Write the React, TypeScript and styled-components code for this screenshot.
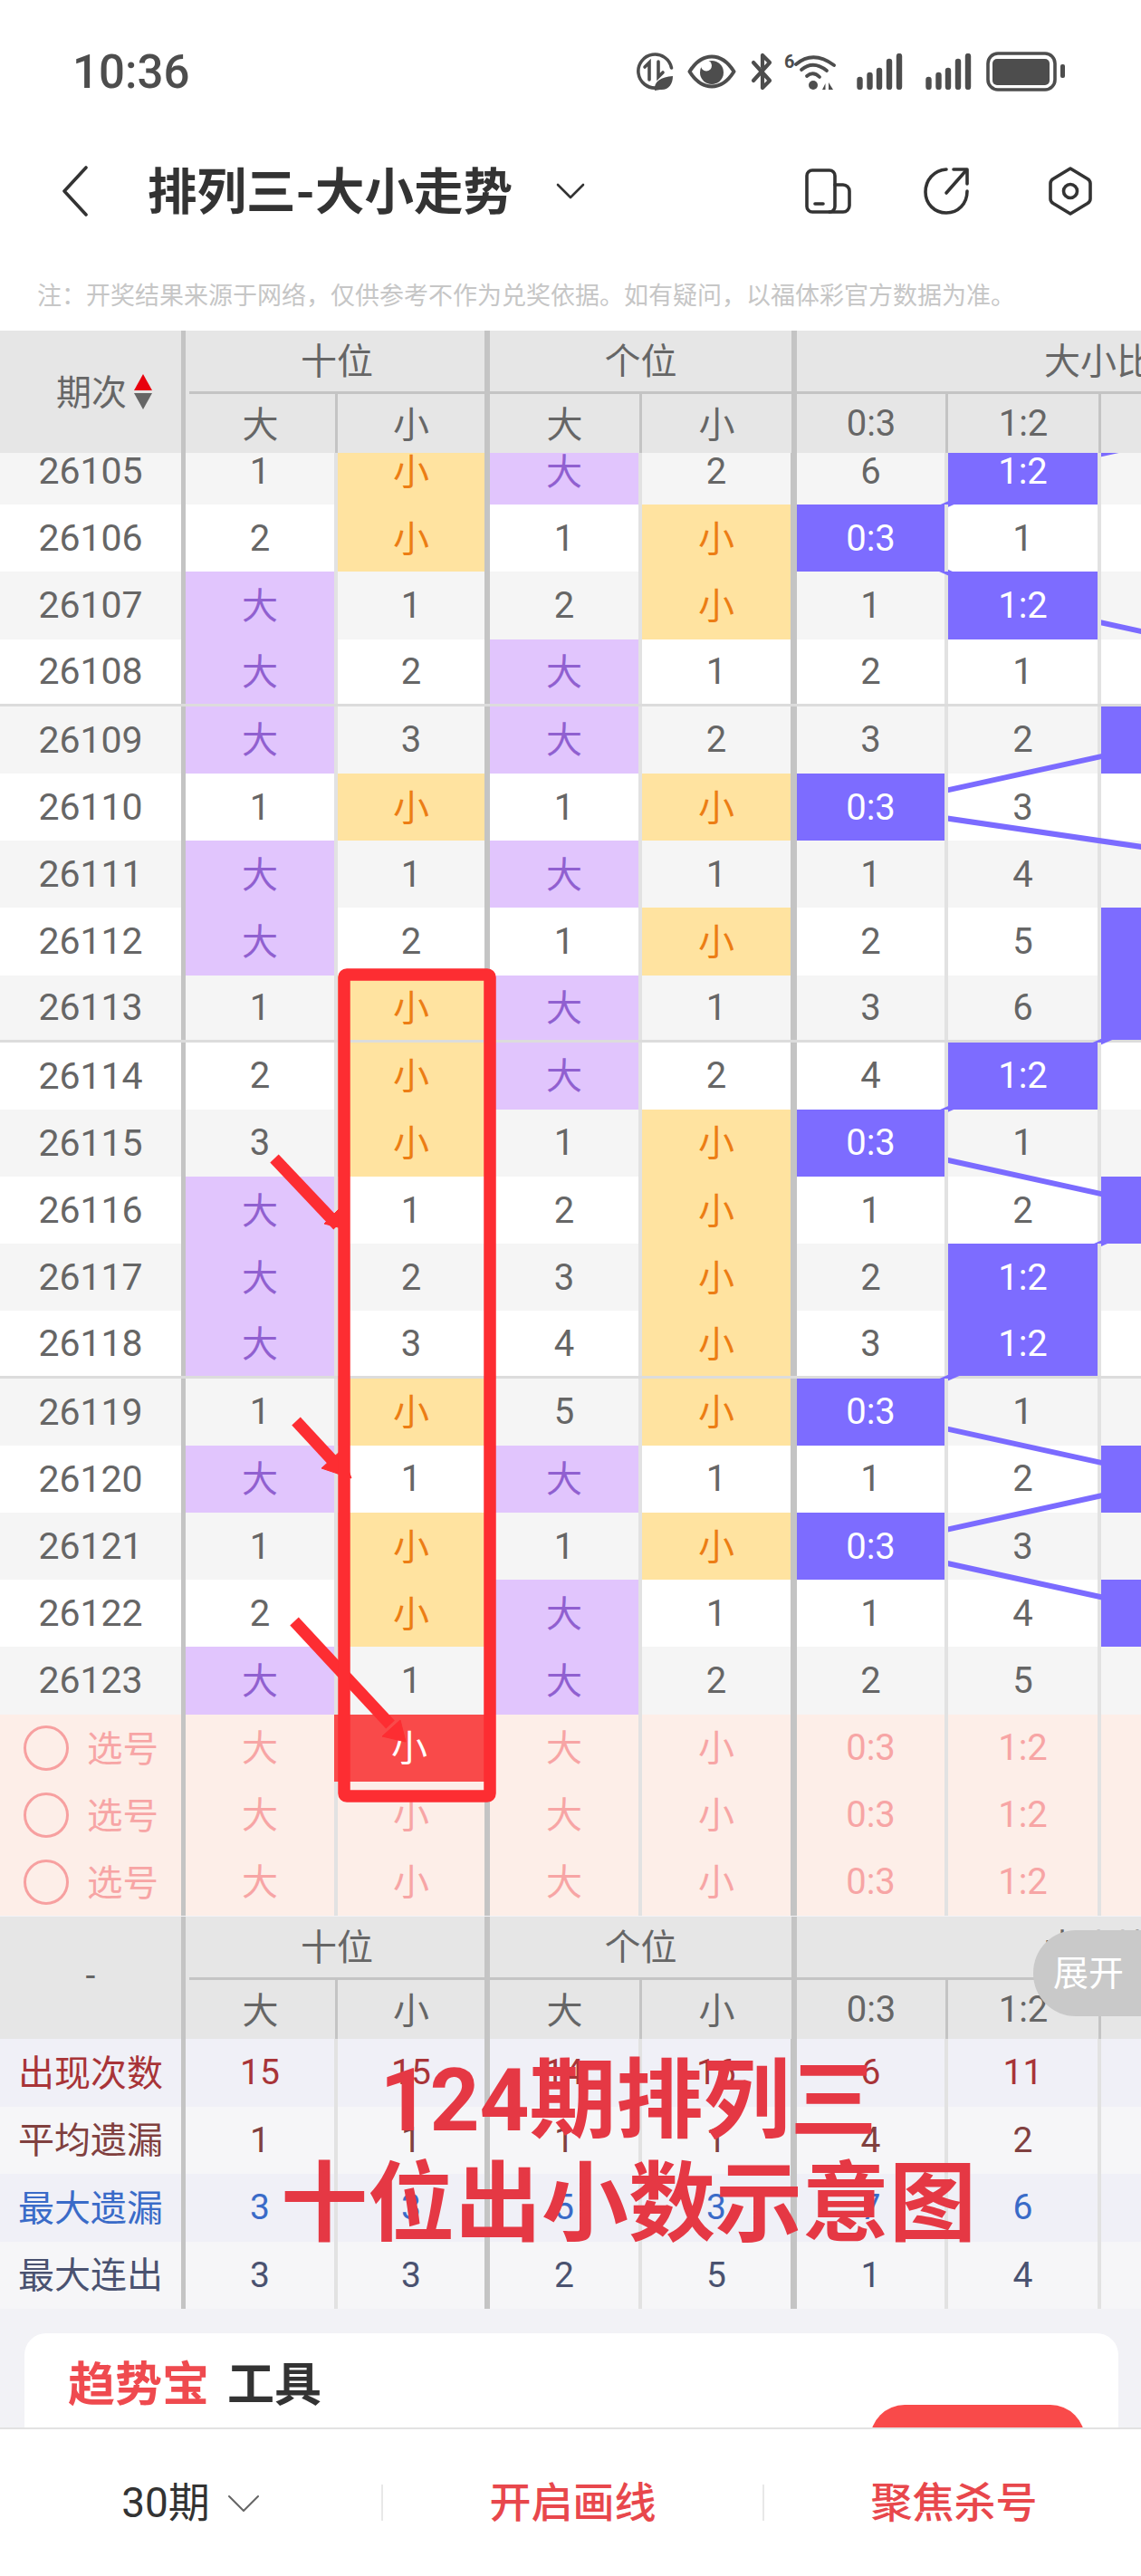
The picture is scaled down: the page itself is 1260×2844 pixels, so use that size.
import styled, { createGlobalStyle } from "styled-components";

const GlobalStyle = createGlobalStyle`
  html, body {
    margin: 0;
    padding: 0;
    background: #fff;
  }
  body {
    font-family: Roboto, "Noto Sans CJK SC", sans-serif;
  }
`;

const COLUMNS = "168px 168px 168px 171px 167px 169px 44px";
const ROW_H = 74.2;
const RATIO_X: Record<number, number> = { 5: 961, 6: 1130, 7: 1299, 8: 1468 };

const Page = styled.div`
  position: relative;
  width: 1260px;
  height: 2844px;
  overflow: hidden;
  display: flex;
  flex-direction: column;
  background: #fff;
`;

const StatusBar = styled.div`
  height: 158px;
  display: flex;
  align-items: center;
  padding: 0 84px 0 80px;
  color: #4d4d4d;
`;

const Time = styled.div`
  font-size: 51px;
  font-weight: 500;
  margin-right: auto;
`;

const StatusIcon = styled.svg<{ $gap?: number }>`
  display: block;
  margin-left: ${(p) => p.$gap ?? 0}px;
  fill: none;
  stroke: #4d4d4d;
`;

const Nav = styled.div`
  height: 106px;
  display: flex;
  align-items: center;
  padding: 0 54px 0 68px;
  color: #333;
`;

const Title = styled.div`
  font-size: 54.5px;
  font-weight: 700;
  margin-left: 65px;
  padding-bottom: 8px;
  white-space: nowrap;
`;

const NavIcon = styled.svg<{ $after?: number }>`
  display: block;
  flex: none;
  margin-right: ${(p) => p.$after ?? 0}px;
  fill: none;
  stroke: #333;
  stroke-width: 3.6;
  stroke-linecap: round;
  stroke-linejoin: round;
`;

const NavChevron = styled(NavIcon)`
  margin-left: 48px;
  margin-right: auto;
  stroke-width: 2.6;
`;

const Note = styled.div`
  height: 101px;
  box-sizing: border-box;
  padding: 20px 0 0 41px;
  display: flex;
  align-items: center;
  font-size: 27px;
  color: #c6c6c6;
  white-space: nowrap;
`;

const Main = styled.div`
  flex: 1;
  min-height: 0;
  overflow: hidden;
  background: #f2f2f6;
`;

const Head = styled.div`
  position: relative;
  display: flex;
  height: 135px;
  background: #e6e6e6;
  color: #666;
  font-size: 40px;
`;

const HeadLabel = styled.div`
  flex: none;
  width: 205px;
  box-sizing: border-box;
  border-right: 5px solid #c4c4c4;
  padding: 0 0 5px 30px;
  display: flex;
  align-items: center;
  justify-content: center;
  gap: 8px;
  font-size: 39px;
`;

const FooterLabel = styled(HeadLabel)`
  padding-left: 0;
`;

const SortMark = styled.div`
  display: flex;
  flex-direction: column;
  gap: 3px;
  padding-top: 5px;
`;

const SortUp = styled.span`
  width: 0;
  height: 0;
  border-left: 10px solid transparent;
  border-right: 10px solid transparent;
  border-bottom: 18px solid #e8000d;
`;

const SortDown = styled(SortUp)`
  border-bottom: none;
  border-top: 18px solid #666;
`;

const HeadBody = styled.div`
  flex: 1;
  min-width: 0;
`;

const GroupRow = styled.div`
  height: 67px;
  margin-left: 4px;
  display: grid;
  grid-template-columns: 332px 339px 1fr;
  border-bottom: 3px solid #c4c4c4;
`;

const GroupCell = styled.div<{ $offset?: number }>`
  box-sizing: border-box;
  display: flex;
  align-items: center;
  justify-content: ${(p) => (p.$offset ? "flex-start" : "center")};
  padding-left: ${(p) => p.$offset ?? 0}px;
  padding-bottom: 6px;
  white-space: nowrap;
  overflow: hidden;
  ${(p) => !p.$offset && "border-right: 6px solid #c4c4c4;"}
`;

const SubRow = styled.div`
  height: 65px;
  display: grid;
  grid-template-columns: ${COLUMNS};
`;

const SubCell = styled.div<{ $thick?: boolean; $last?: boolean; $cjk?: boolean }>`
  box-sizing: border-box;
  display: flex;
  align-items: center;
  justify-content: center;
  padding-bottom: ${(p) => (p.$cjk ? 4 : 0)}px;
  border-right: ${(p) => (p.$last ? 0 : p.$thick ? 6 : 3)}px solid #c4c4c4;
`;

const ExpandTab = styled.div`
  position: absolute;
  top: 15px;
  right: 0;
  width: 119px;
  height: 95px;
  box-sizing: border-box;
  padding: 0 0 7px 22px;
  display: flex;
  align-items: center;
  background: #c9c9c9;
  border-radius: 47px 0 0 47px;
  color: #fff;
  font-size: 39px;
  white-space: nowrap;
`;

const Body = styled.div`
  height: 1616px;
  overflow: hidden;
`;

const BodyInner = styled.div`
  position: relative;
  margin-top: -17px;
`;

const Lines = styled.svg`
  position: absolute;
  top: 0;
  left: 0;
  z-index: 1;
  overflow: visible;
  stroke: #7b6bff;
  stroke-width: 6;
`;

const Row = styled.div<{ $alt?: boolean; $rule?: boolean; $pick?: boolean; $h?: number }>`
  box-sizing: border-box;
  height: ${(p) => p.$h ?? ROW_H}px;
  display: grid;
  grid-template-columns: 205px ${COLUMNS};
  background: ${(p) => (p.$pick ? "#fdeee8" : p.$alt ? "#f5f5f5" : "#fff")};
  color: #666;
  font-size: 40px;
  ${(p) => p.$rule && "border-bottom: 3px solid #dcdcdc;"}
`;

type Tone = "plain" | "big" | "small" | "hit" | "pick" | "hot";

const tones: Record<Tone, string> = {
  plain: "",
  big: "background: #e1c5fd; color: #9060d0;",
  small: "background: #ffe3a0; color: #ec7d14;",
  hit: "position: relative; z-index: 2; background: #7d6cff; color: #fff;",
  pick: "color: #f7a5a5;",
  hot: "margin-left: -4px; background: #f94a4a; color: #fff;",
};

const Cell = styled.div<{ $tone?: Tone; $thick?: boolean; $edge?: number; $cjk?: boolean }>`
  box-sizing: border-box;
  display: flex;
  align-items: center;
  justify-content: center;
  padding-bottom: ${(p) => (p.$cjk ? 5 : 0)}px;
  border-right: ${(p) => p.$edge ?? (p.$thick ? 6 : 4)}px solid
    ${(p) => (p.$thick ? "#c4c4c4" : "#e2e2e2")};
  ${(p) => tones[p.$tone ?? "plain"]}
`;

const PeriodCell = styled(Cell)`
  border-right: 5px solid #c4c4c4;
  font-size: 41px;
`;

const PickCell = styled(PeriodCell)`
  justify-content: flex-start;
  gap: 20px;
  padding-left: 26px;
  font-size: 39.5px;
  color: #f7a5a5;
`;

const PickCircle = styled.span`
  width: 50px;
  height: 50px;
  margin-top: 5px;
  box-sizing: border-box;
  border: 3px solid #f7a0a0;
  border-radius: 50%;
`;

const StatRow = styled.div<{ $alt?: boolean; $color: string }>`
  height: 74.5px;
  display: grid;
  grid-template-columns: 205px ${COLUMNS};
  background: ${(p) => (p.$alt ? "#f6f6f8" : "#f0f0f7")};
  color: ${(p) => p.$color};
  font-size: 39px;
`;

const StatLabel = styled(Cell)`
  border-right: 5px solid #c4c4c4;
  white-space: nowrap;
  font-size: 40px;
`;

const Card = styled.div`
  margin: 27px 25px 0 27px;
  padding: 32px 37px 0 48px;
  height: 220px;
  display: flex;
  align-items: flex-start;
  background: #fff;
  border-radius: 24px 24px 0 0;
`;

const CardTitle = styled.div`
  display: flex;
  gap: 20px;
  font-size: 52px;
  line-height: 52px;
  font-weight: 700;
  color: #333;
`;

const CardAccent = styled.span`
  color: #ef4a4f;
`;

const CardButton = styled.div`
  margin: 47px 0 0 auto;
  width: 237px;
  height: 76px;
  border-radius: 38px;
  background: #f94a4a;
`;

const BottomBar = styled.div`
  flex: none;
  height: 164px;
  box-sizing: border-box;
  border-top: 2px solid #e2e2e2;
  background: #fff;
  display: grid;
  grid-template-columns: repeat(3, 421px);
  align-items: center;
`;

const BarItem = styled.div<{ $first?: boolean; $accent?: boolean }>`
  height: 40px;
  box-sizing: border-box;
  padding-bottom: 8px;
  display: flex;
  align-items: center;
  justify-content: center;
  gap: 19px;
  font-size: 46px;
  font-weight: ${(p) => (p.$accent ? 500 : 400)};
  color: ${(p) => (p.$accent ? "#e8474c" : "#333")};
  ${(p) => !p.$first && "border-left: 2px solid #e8e8e8;"}
`;

const BarChevron = styled(NavIcon)`
  stroke: #666;
  stroke-width: 2;
  margin-top: 10px;
`;

const Annotations = styled.svg`
  position: absolute;
  inset: 0;
  z-index: 5;
  pointer-events: none;
`;

const BigCaption = styled.div`
  position: absolute;
  top: 2262px;
  left: 294px;
  width: 800px;
  z-index: 6;
  text-align: center;
  font-size: 96px;
  line-height: 114px;
  font-weight: 700;
  color: #e53844;
  white-space: nowrap;
`;

type Draw = [string, string, string, string, string, string, string, number];

const rows: Draw[] = [
  ["26105", "1", "小", "大", "2", "6", "1:2", 6],
  ["26106", "2", "小", "1", "小", "0:3", "1", 5],
  ["26107", "大", "1", "2", "小", "1", "1:2", 6],
  ["26108", "大", "2", "大", "1", "2", "1", 8],
  ["26109", "大", "3", "大", "2", "3", "2", 7],
  ["26110", "1", "小", "1", "小", "0:3", "3", 5],
  ["26111", "大", "1", "大", "1", "1", "4", 8],
  ["26112", "大", "2", "1", "小", "2", "5", 7],
  ["26113", "1", "小", "大", "1", "3", "6", 7],
  ["26114", "2", "小", "大", "2", "4", "1:2", 6],
  ["26115", "3", "小", "1", "小", "0:3", "1", 5],
  ["26116", "大", "1", "2", "小", "1", "2", 7],
  ["26117", "大", "2", "3", "小", "2", "1:2", 6],
  ["26118", "大", "3", "4", "小", "3", "1:2", 6],
  ["26119", "1", "小", "5", "小", "0:3", "1", 5],
  ["26120", "大", "1", "大", "1", "1", "2", 7],
  ["26121", "1", "小", "1", "小", "0:3", "3", 5],
  ["26122", "2", "小", "大", "1", "1", "4", 7],
  ["26123", "大", "1", "大", "2", "2", "5", 8],
];

const stats = [
  { label: "出现次数", color: "#a83438", values: ["15", "15", "14", "16", "6", "11"] },
  { label: "平均遗漏", color: "#80403f", values: ["1", "1", "1", "1", "4", "2"] },
  { label: "最大遗漏", color: "#3a6bc8", values: ["3", "3", "5", "3", "7", "6"] },
  { label: "最大连出", color: "#4a5270", values: ["3", "3", "2", "5", "1", "4"] },
];

const columnLabels = ["大", "小", "大", "小", "0:3", "1:2", ""];

const isThick = (i: number) => i === 1 || i === 3;
const edgeOf = (i: number) => (i === 6 ? 0 : i === 3 ? 7 : undefined);
const isCjk = (value: string) => value === "大" || value === "小";

function toneOf(value: string): Tone {
  if (value === "大") return "big";
  if (value === "小") return "small";
  if (value === "0:3" || value === "1:2") return "hit";
  return "plain";
}

function TableHead({ label, children }: { label: React.ReactNode; children?: React.ReactNode }) {
  return (
    <Head>
      {label}
      <HeadBody>
        <GroupRow>
          <GroupCell>十位</GroupCell>
          <GroupCell>个位</GroupCell>
          <GroupCell $offset={273}>大小比</GroupCell>
        </GroupRow>
        <SubRow>
          {columnLabels.map((text, i) => (
            <SubCell key={i} $thick={isThick(i)} $last={i === 6} $cjk={isCjk(text)}>
              {text}
            </SubCell>
          ))}
        </SubRow>
      </HeadBody>
      {children}
    </Head>
  );
}

function TrendLines() {
  const points = [
    { x: RATIO_X[8], y: -ROW_H / 2 },
    ...rows.map((r, i) => ({ x: RATIO_X[r[7]], y: ROW_H * (i + 0.5) })),
  ];
  return (
    <Lines width="1260" height="1410">
      {points.slice(1).map((p, i) => (
        <line key={i} x1={points[i].x} y1={points[i].y} x2={p.x} y2={p.y} />
      ))}
    </Lines>
  );
}

function StatusIcons() {
  return (
    <>
      <StatusIcon width="42" height="42" viewBox="0 0 42 42" strokeWidth="3.6" strokeLinecap="round">
        <path d="M23 39A18.5 18.5 0 1 1 39.5 17" />
        <path d="M15 30V11l-5 5" />
        <path d="M25 10v17l5-5" />
        <path d="M21 41c-1-9 7-14 20-15 0 9-5 16-14 15l-6 1z" fill="#4d4d4d" stroke="none" />
      </StatusIcon>
      <StatusIcon $gap={15} width="54" height="38" viewBox="0 0 54 38" strokeWidth="4">
        <path d="M2.500 19C10 7 18 2.500 27 2.500S44 7 51.500 19C44 31 36 35.500 27 35.500S10 31 2.500 19z" strokeLinejoin="round" />
        <circle cx="27" cy="20" r="13" fill="#4d4d4d" stroke="none" />
        <circle cx="21" cy="12.500" r="6" fill="#fff" stroke="none" />
      </StatusIcon>
      <StatusIcon $gap={16} width="25" height="42" viewBox="0 0 25 42" strokeWidth="4.2" strokeLinecap="round" strokeLinejoin="round">
        <path d="M3 11l18 20-8 8V21" />
        <path d="M3 31L21 11 13 3v13" />
      </StatusIcon>
      <StatusIcon $gap={12} width="58" height="42" viewBox="0 0 58 42" strokeWidth="3.8" strokeLinecap="round">
        <text x="0" y="17" fontFamily="Roboto, sans-serif" fontWeight="700" fontSize="20" fill="#4d4d4d" stroke="none">6</text>
        <path d="M13 13Q32-3 55 14" />
        <path d="M19 19Q32 8 47 20" />
        <path d="M25 26Q32 20 39 27" />
        <circle cx="32" cy="36" r="5" fill="#4d4d4d" stroke="none" />
        <path d="M42 41l3.500-7v7zM49 33l5 8h-5z" fill="#4d4d4d" stroke="none" />
      </StatusIcon>
      {[22, 25].map((gap) => (
        <StatusIcon key={gap} $gap={gap} width="51" height="40" viewBox="0 0 51 40" strokeWidth="6.4" strokeLinecap="round">
          <path d="M3.500 37v-8M14.500 37V24M25 37V19M36 37V9M47 37V3" />
        </StatusIcon>
      ))}
      <StatusIcon $gap={16} width="87" height="44" viewBox="0 0 87 44" strokeWidth="3.6">
        <rect x="2" y="2" width="74" height="40" rx="11" />
        <rect x="7" y="8" width="63" height="29" rx="5" fill="#4d4d4d" stroke="none" />
        <rect x="82" y="14" width="5" height="15" rx="2" fill="#4d4d4d" stroke="none" />
      </StatusIcon>
    </>
  );
}

export default function App() {
  return (
    <Page>
      <GlobalStyle />
      <StatusBar>
        <Time>10:36</Time>
        <StatusIcons />
      </StatusBar>
      <Nav>
        <NavIcon width="30" height="56" viewBox="0 0 30 56">
          <path d="M27 2L3 28l24 26" />
        </NavIcon>
        <Title>排列三-大小走势</Title>
        <NavChevron width="32" height="18" viewBox="0 0 32 18">
          <path d="M2 2l14 14L30 2" />
        </NavChevron>
        <NavIcon $after={79} width="52" height="50" viewBox="0 0 52 50">
          <rect x="2" y="2" width="31" height="46" rx="6" />
          <path d="M33 18h9a7 7 0 0 1 7 7v16a7 7 0 0 1-7 7H27" />
          <path d="M11 39h9" />
        </NavIcon>
        <NavIcon $after={88} width="50" height="52" viewBox="0 0 50 52">
          <path d="M25 2C11 3 2 14 2 27c0 13 10 23 23 23s23-10 23-24" />
          <path d="M25 28L47 3" />
          <path d="M33 2h15v16" />
        </NavIcon>
        <NavIcon width="48" height="54" viewBox="0 0 48 54">
          <path d="M24 2l19 11.500q3 2 3 5v17q0 3-3 5L24 52 5 40.500q-3-2-3-5v-17q0-3 3-5z" />
          <circle cx="24" cy="27" r="7.500" />
        </NavIcon>
      </Nav>
      <Note>注：开奖结果来源于网络，仅供参考不作为兑奖依据。如有疑问，以福体彩官方数据为准。</Note>

      <Main>
        <TableHead
          label={
            <HeadLabel>
              期次
              <SortMark>
                <SortUp />
                <SortDown />
              </SortMark>
            </HeadLabel>
          }
        />
        <Body>
          <BodyInner>
            <TrendLines />
            {rows.map((r, i) => (
              <Row key={r[0]} $alt={i % 2 === 0} $rule={i % 5 === 3 && i < rows.length - 1}>
                <PeriodCell>{r[0]}</PeriodCell>
                {r.slice(1, 7).map((value, c) => (
                  <Cell
                    key={c}
                    $tone={toneOf(value as string)}
                    $thick={isThick(c)}
                    $edge={edgeOf(c)}
                    $cjk={isCjk(value as string)}
                  >
                    {value}
                  </Cell>
                ))}
                <Cell $tone={r[7] === 7 ? "hit" : "plain"} $edge={0} />
              </Row>
            ))}
            {[0, 1, 2].map((n) => (
              <Row key={n} $pick $h={74}>
                <PickCell $cjk>
                  <PickCircle />
                  选号
                </PickCell>
                {columnLabels.map((label, c) => (
                  <Cell
                    key={c}
                    $tone={n === 0 && c === 1 ? "hot" : "pick"}
                    $thick={isThick(c)}
                    $edge={edgeOf(c)}
                    $cjk={isCjk(label)}
                  >
                    {label}
                  </Cell>
                ))}
              </Row>
            ))}
          </BodyInner>
        </Body>
        <TableHead label={<FooterLabel>-</FooterLabel>}>
          <ExpandTab>展开</ExpandTab>
        </TableHead>
        {stats.map((s, i) => (
          <StatRow key={s.label} $alt={i % 2 === 1} $color={s.color}>
            <StatLabel $cjk>{s.label}</StatLabel>
            {s.values.map((value, c) => (
              <Cell key={c} $thick={isThick(c)} $edge={edgeOf(c)}>
                {value}
              </Cell>
            ))}
            <Cell $edge={0} />
          </StatRow>
        ))}
        <Card>
          <CardTitle>
            <CardAccent>趋势宝</CardAccent>
            工具
          </CardTitle>
          <CardButton />
        </Card>
      </Main>

      <BottomBar>
        <BarItem $first>
          30期
          <BarChevron width="36" height="20" viewBox="0 0 36 20">
            <path d="M2 2l16 16L34 2" />
          </BarChevron>
        </BarItem>
        <BarItem $accent>开启画线</BarItem>
        <BarItem $accent>聚焦杀号</BarItem>
      </BottomBar>

      <Annotations width="1260" height="2844" viewBox="0 0 1260 2844">
        <g fill="#fd2d32" stroke="#fd2d32" strokeWidth="13">
          <path d="M303 1279l70 74" fill="none" />
          <path d="M327 1569l50 54" fill="none" />
          <path d="M325 1790l106 114" fill="none" />
          <path d="M385 1358l-27-7 20-20z" strokeWidth="1" />
          <path d="M388 1632l-33-11 22-20z" strokeWidth="1" />
          <path d="M448 1923l-26-6 20-18z" strokeWidth="1" />
        </g>
        <rect x="380" y="1076" width="161" height="907" rx="3" fill="none" stroke="#fd2d32" strokeWidth="13.500" strokeLinejoin="round" />
      </Annotations>
      <BigCaption>
        124期排列三
        <br />
        十位出小数示意图
      </BigCaption>
    </Page>
  );
}
